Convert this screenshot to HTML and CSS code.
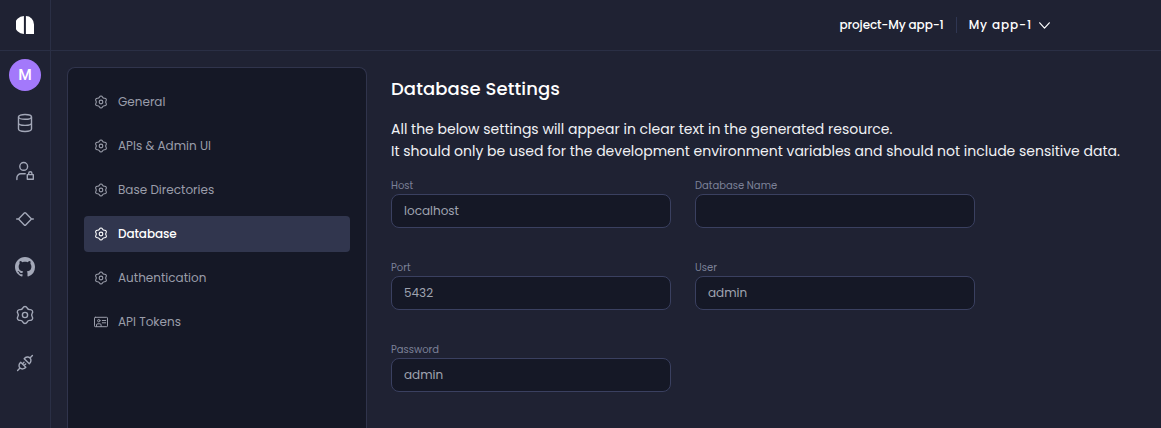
FILE: index.html
```html
<!DOCTYPE html>
<html lang="en">
<head>
<meta charset="utf-8">
<title>Database Settings</title>
<link rel="stylesheet" href="styles.css">
</head>
<body>
<svg class="defs" width="0" height="0" aria-hidden="true">
  <symbol id="gear" viewBox="0 0 20 20">
    <path d="M7.920 2.830A2.300 2.300 0 0 1 12.080 2.830Q13 4.800 15.170 4.610A2.300 2.300 0 0 1 17.250 8.220Q16 10 17.250 11.780A2.300 2.300 0 0 1 15.170 15.390Q13 15.200 12.080 17.170A2.300 2.300 0 0 1 7.920 17.170Q7 15.200 4.830 15.390A2.300 2.300 0 0 1 2.750 11.780Q4 10 2.750 8.220A2.300 2.300 0 0 1 4.830 4.610Q7 4.800 7.920 2.830Z"/>
    <circle cx="10" cy="10" r="2.600"/>
  </symbol>
</svg>
<div class="app">
  <aside class="rail">
    <div class="logo">
      <svg width="18" height="18" viewBox="0 0 18 18"><path d="M7.900 0v18A9 9 0 0 1 7.900 0ZM9.900 0A8.100 8.500 0 0 1 18 8.500V18H9.900Z" fill="#fff"/></svg>
    </div>
    <nav class="rail-nav">
      <span class="avatar">M</span>
      <svg class="icon" viewBox="0 0 20 20"><ellipse cx="10" cy="3.900" rx="6.500" ry="2.400"/><path d="M3.500 3.900v12.200c0 1.400 2.900 2.400 6.500 2.400s6.500-1 6.500-2.400V3.900M3.500 10c0 1.400 2.900 2.400 6.500 2.400s6.500-1 6.500-2.400"/></svg>
      <svg class="icon" viewBox="0 0 20 20"><circle cx="8.700" cy="5.400" r="3.900"/><path d="M1.900 18.500v-1.700a4 4 0 0 1 4-4h4.300M12.300 13.600h6v4.700h-6zM13.700 13.500v-1.200a1.600 1.600 0 0 1 3.200 0v1.200"/></svg>
      <svg class="icon" viewBox="0 0 20 20"><path d="M1.700 10h1.800M16.500 10h1.800M3.500 10 9.300 4.100q.7-.7 1.400 0L16.500 10l-5.800 5.900q-.7.700-1.400 0Z"/></svg>
      <svg class="github" viewBox="0 0 16 16"><path d="M8 0C3.580 0 0 3.580 0 8c0 3.540 2.290 6.530 5.470 7.590.4.070.55-.17.55-.38 0-.19-.01-.82-.01-1.490-2.010.37-2.530-.49-2.690-.94-.09-.23-.48-.94-.82-1.130-.28-.15-.68-.52-.01-.53.63-.01 1.080.58 1.230.82.72 1.210 1.870.87 2.330.66.07-.52.28-.87.51-1.070-1.780-.2-3.640-.89-3.640-3.950 0-.87.31-1.590.82-2.150-.08-.2-.36-1.020.08-2.120 0 0 .67-.21 2.200.82.64-.18 1.320-.27 2-.27s1.360.09 2 .27c1.530-1.040 2.200-.82 2.200-.82.44 1.100.16 1.920.08 2.120.51.56.82 1.270.82 2.150 0 3.070-1.870 3.750-3.650 3.950.29.25.54.73.54 1.480 0 1.070-.01 1.930-.01 2.200 0 .21.15.46.55.38A8.010 8.010 0 0 0 16 8c0-4.420-3.580-8-8-8Z"/></svg>
      <svg class="icon"><use href="#gear"/></svg>
      <svg class="icon" viewBox="0 0 20 20"><path d="M2.600 17.400 5 15M15 5l2.400-2.400M5.700 9.200l5.100 5.100C9.200 16.200 6.600 16.500 5 15S3.800 10.800 5.700 9.200ZM9.200 5.700l5.100 5.100c1.900-1.600 2.200-4.200.7-5.800S10.800 3.800 9.200 5.700ZM7.400 10.900l1.600-1.600M9.100 12.600l1.600-1.600"/></svg>
    </nav>
  </aside>
  <div class="page">
    <header class="topbar">
      <span class="project">project-My app-1</span>
      <button class="picker"><span>My app-1</span>
        <svg width="11" height="7" viewBox="0 0 11 7"><path d="m.7.800 4.800 5.300L10.300.8"/></svg>
      </button>
    </header>
    <div class="body">
      <nav class="menu">
        <a class="item"><svg><use href="#gear"/></svg><span>General</span></a>
        <a class="item"><svg><use href="#gear"/></svg><span>APIs &amp; Admin UI</span></a>
        <a class="item"><svg><use href="#gear"/></svg><span>Base Directories</span></a>
        <a class="item active"><svg><use href="#gear"/></svg><span>Database</span></a>
        <a class="item"><svg><use href="#gear"/></svg><span>Authentication</span></a>
        <a class="item"><svg class="card" viewBox="0 0 14 14"><rect x=".5" y="2.300" width="13" height="9.400" rx=".8"/><circle cx="4.800" cy="5.700" r="1.200"/><path d="M2.500 11.500V10q0-1.200 1.200-1.200h2.200q1.200 0 1.200 1.200v1.500M8.300 5.500h3.400M8.300 7.800h3.400"/></svg><span>API Tokens</span></a>
      </nav>
      <main class="settings">
        <h1>Database Settings</h1>
        <p>All the below settings will appear in clear text in the generated resource.<br>It should only be used for the development environment variables and should not include sensitive data.</p>
        <form class="fields">
          <label><span>Host</span><input value="localhost"></label>
          <label><span>Database Name</span><input value=""></label>
          <label><span>Port</span><input value="5432"></label>
          <label><span>User</span><input value="admin"></label>
          <label><span>Password</span><input value="admin"></label>
        </form>
      </main>
    </div>
  </div>
</div>
</body>
</html>
```
FILE: styles.css
```css
* { box-sizing: border-box; }
body {
  margin: 0;
  overflow: hidden;
  background: #1f2233;
  color: #fff;
  font-family: Poppins, Inter, "Open Sans", sans-serif;
  -webkit-font-smoothing: antialiased;
}
svg { display: block; flex: none; fill: none; stroke: currentColor; stroke-linecap: round; stroke-linejoin: round; }
.defs { position: absolute; }
.app { display: flex; height: 428px; }
.rail { width: 51px; flex: none; border-right: 1px solid #2a2f45; }
.logo { height: 51px; border-bottom: 1px solid #2a2f45; display: grid; place-items: center; }
.logo svg { stroke: none; }
.rail-nav { display: grid; grid-auto-rows: 48px; place-items: center; color: #a3a8b8; }
.avatar { width: 32px; height: 32px; border-radius: 50%; background: #a379fb; color: #fff; font: 500 15.500px/32px Roboto, sans-serif; text-align: center; }
.icon { width: 20px; height: 20px; stroke-width: 1.4; }
.github { width: 20px; height: 20px; stroke: none; fill: #a3a8b8; }
.page { flex: 1; min-width: 0; display: flex; flex-direction: column; }
.topbar { height: 51px; flex: none; border-bottom: 1px solid #2a2f45; display: flex; align-items: center; justify-content: flex-end; padding-right: 111px; font-size: 12px; font-weight: 500; }
.project { padding-right: 12px; letter-spacing: -.12px; }
.picker { height: 16px; display: flex; align-items: center; gap: 7px; padding: 0 0 0 12px; border: 0; border-left: 1px solid #2f3652; background: none; color: inherit; font: inherit; letter-spacing: .88px; }
.picker svg { stroke-width: 1.2; }
.body { flex: 1; display: flex; gap: 24px; padding: 16px 0 0 16px; min-height: 0; }
.menu { width: 300px; flex: none; display: flex; flex-direction: column; gap: 8px; padding: 16px; background: #151826; border: 1px solid #30344c; border-bottom: 0; border-radius: 8px 8px 0 0; }
.item { height: 36px; display: flex; align-items: center; gap: 10px; padding-left: 10px; border-radius: 4px; color: #9a9daa; font-size: 12px; white-space: nowrap; }
.item svg { width: 14px; height: 14px; stroke-width: 1.6; }
.item .card { stroke-width: 1; }
.active { background: #31364e; color: #fff; font-weight: 500; }
.active span { letter-spacing: -.08px; }
.settings { flex: 1; min-width: 0; padding-top: 8px; }
h1 { margin: 0; font-size: 18px; line-height: 27px; font-weight: 500; letter-spacing: .1px; }
p { margin: 16px 0 0; font-size: 14px; line-height: 22px; color: #f0f1f5; white-space: nowrap; }
.fields { display: grid; grid-template-columns: 280px 280px; column-gap: 24px; row-gap: 32px; margin-top: 16px; }
label { display: flex; flex-direction: column; font-size: 10px; line-height: 16px; color: #7c8198; }
input { width: 280px; height: 34px; padding: 0 12px; border: 1px solid #3a4060; border-radius: 8px; background: #151826; color: #9fa3b0; font: 12px Poppins, Inter, sans-serif; outline: 0; }
```
